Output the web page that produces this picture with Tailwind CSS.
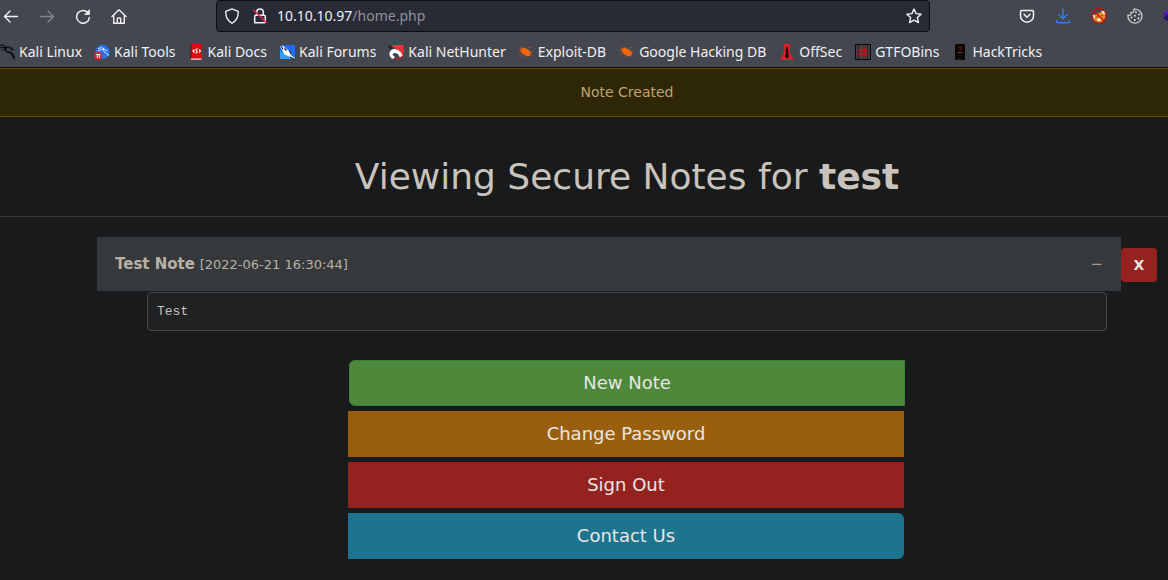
<!DOCTYPE html>
<html lang="en">
<head>
<meta charset="utf-8">
<title>Secure Notes</title>
<script src="https://cdn.jsdelivr.net/npm/@tailwindcss/browser@4"></script>
</head>
<body class="min-h-screen overflow-x-hidden bg-[#181a1b] font-['DejaVu_Sans',sans-serif] text-[#c8c3bc]">
<header class="overflow-hidden border-b border-[#0c0c0f] bg-[#44474f] font-['Noto_Sans',sans-serif] text-[#f0f0f2]">
  <div class="-ml-[7px] -mr-[21px] flex h-8 items-center">
    <nav class="flex" aria-label="Navigation">
      <button class="flex h-8 w-9 items-center justify-center" aria-label="Back"><svg width="16" height="16" viewBox="0 0 16 16" fill="none" stroke="currentColor" stroke-width="1.400" stroke-linecap="round" stroke-linejoin="round"><path d="M14.500 8.500H1.500M7 3 1.500 8.500 7 14"/></svg></button>
      <button class="flex h-8 w-9 items-center justify-center text-[#85878c]" aria-label="Forward"><svg width="16" height="16" viewBox="0 0 16 16" fill="none" stroke="currentColor" stroke-width="1.400" stroke-linecap="round" stroke-linejoin="round"><path d="M1.500 8.500h13M9 3l5.500 5.500L9 14"/></svg></button>
      <button class="flex h-8 w-9 items-center justify-center" aria-label="Reload"><svg width="16" height="16" viewBox="0 0 16 16" fill="none" stroke="currentColor" stroke-width="1.500" stroke-linecap="round" stroke-linejoin="round"><path d="M13.300 5.200A6.400 6.400 0 1 0 14.400 9.500"/><path d="M14.500 2v4.500H10z" fill="currentColor" stroke-width=".8"/></svg></button>
      <button class="flex h-8 w-9 items-center justify-center" aria-label="Home"><svg width="16" height="16" viewBox="0 0 16 16" fill="none" stroke="currentColor" stroke-width="1.400" stroke-linecap="round" stroke-linejoin="round"><path d="M1 8.500 8 1.800l7 6.700M2.700 7v8.200h10.600V7M6.300 15v-4.200q0-.8.8-.8h1.800q.8 0 .8.8V15"/></svg></button>
    </nav>
    <div class="mx-[79px] flex h-8 flex-1 items-center rounded-sm border border-[#0c0c0f] bg-[#282a36] px-[7px]">
      <svg class="mr-3 shrink-0" width="16" height="16" viewBox="0 0 16 16" fill="none" stroke="currentColor" stroke-width="1.400" stroke-linejoin="round"><path d="M8 .9 14.200 3.300q.5 8-6.200 11.900Q1.300 11.300 1.800 3.300z"/></svg>
      <svg class="mr-[9px] shrink-0" width="16" height="16" viewBox="0 0 16 16" fill="none" stroke="currentColor" stroke-width="1.500" stroke-linejoin="round"><path d="M4.700 7V4.300a3.300 3.300 0 0 1 6.600 0V7M2.700 14.800V8.300q0-1 1-1h8.600q1 0 1 1v5.500q0 1-1 1z"/><path d="M1.300 1.800 14.800 15" stroke="#e22850"/></svg>
      <div class="relative min-w-0 flex-1 text-[14px] leading-6">
        <input aria-label="Address" value="10.10.10.97/home.php" class="block w-full bg-transparent text-transparent outline-none">
        <div class="pointer-events-none absolute inset-0" aria-hidden="true">10.10.10.97<span class="text-[#91929a]">/home.php</span></div>
      </div>
      <button aria-label="Bookmark this page"><svg width="16" height="16" viewBox="0 0 16 16" fill="none" stroke="currentColor" stroke-width="1.400" stroke-linejoin="round"><path d="m8 1 2.100 4.600 5 .6-3.700 3.400 1 5L8 12.100l-4.400 2.500 1-5L.9 6.200l5-.6z"/></svg></button>
    </div>
    <div class="flex">
      <button class="flex h-8 w-9 items-center justify-center" aria-label="Pocket"><svg width="16" height="16" viewBox="0 0 16 16" fill="none" stroke="currentColor" stroke-width="1.500" stroke-linecap="round" stroke-linejoin="round"><path d="M2.700 2.500h10.600q1.200 0 1.200 1.200v4A6.500 6.500 0 0 1 1.500 7.700v-4q0-1.200 1.200-1.200zM5 6.300l3 3 3-3"/></svg></button>
      <button class="flex h-8 w-9 items-center justify-center text-[#2f7df6]" aria-label="Downloads"><svg width="16" height="16" viewBox="0 0 16 16" fill="none" stroke="currentColor" stroke-width="1.500" stroke-linecap="round" stroke-linejoin="round"><path d="M8 1v9.500M3.800 6.500 8 10.700l4.200-4.200M1.500 12.500v1q0 1.300 1.300 1.300h10.400q1.300 0 1.300-1.300v-1"/></svg></button>
      <button class="flex h-8 w-9 items-center justify-center" aria-label="Proxy"><svg width="16" height="16" viewBox="0 0 16 16"><path d="m3 7 4-1.500L10 4l4 1 .5 4-2 4-4 2L4 13 2 10z" fill="#ea8c1e"/><path d="m10 3 4-.5.500 4-2-.5zM1.500 6 4 8l-1 3zM6 11l2-1 2 1-1 2H7z" fill="#fff3e4"/><path d="M5 8.500h2v1.500zM10 7h2l-1.500 1.500z" fill="#5c3213"/><circle cx="8" cy="8" r="7.300" fill="none" stroke="#c40d14" stroke-width="1.200"/><path d="m3 3 10 10" stroke="#c40d14" stroke-width="1.200"/></svg></button>
      <button class="flex h-8 w-9 items-center justify-center" aria-label="Cookies"><svg width="16" height="16" viewBox="0 0 16 16" fill="none" stroke="#d0d0d2" stroke-width="1.300"><path d="M7 1.200A7 7 0 1 1 1 7.200q1.800.6 2.800-.6.600-.9.200-2 1.600.3 2.400-.8.700-1 .6-2.600z"/><g fill="#dcdcde" stroke="none"><circle cx="9" cy="4.200" r="1"/><circle cx="12" cy="6.500" r="1"/><circle cx="8" cy="7.800" r="1"/><circle cx="4.500" cy="9.500" r="1"/><circle cx="11.500" cy="10.300" r="1.100"/><circle cx="7.800" cy="12" r="1.100"/></g></svg></button>
      <button class="flex h-8 w-9 items-center justify-center" aria-label="Extension"><svg width="16" height="16" viewBox="0 0 16 16"><path d="m0 5 8-4 8 4-8 4z" fill="#5d14d8"/><path d="m0 5 8 4 8-4-3 3 3 2-8 5-8-5 3-2z" fill="#24106e"/></svg></button>
    </div>
  </div>
  <nav class="-ml-px flex h-[35px] items-center gap-3 whitespace-nowrap pt-[5px] text-[14px] leading-5" aria-label="Bookmarks">
    <a href="#" class="flex items-center gap-1"><svg width="16" height="16" viewBox="0 0 16 16" fill="none" stroke="#08080a" stroke-linecap="round"><path d="M0 1.300q4-1.300 7 1.700M0 4q4-1.500 7-.5M3 6.500q2-2 4-2.500" stroke-width="1"/><path d="M7 3.500q-1.500 4.500 3 4.700 4.500.3 5 6.500" stroke-width="1.500"/><path d="m8 3.200 3-.2 4 3M11 4.500l2 2.200M11 8.500q3 1 2.500 4" stroke-width="1"/></svg>Kali Linux</a>
    <a href="#" class="flex items-center gap-1"><svg width="16" height="16" viewBox="0 0 16 16"><circle cx="8.500" cy="8" r="7.200" fill="#2372ee"/><path d="M4 4.500q4-2 6.500.5M4 7q3-2 6-1.500-1 3 1.500 3.300t3 3.200M10.500 5.500l3 1.500" fill="none" stroke="#cfe3ff"/><circle cx="4" cy="12" r="3.900" fill="#e42332"/><path d="M2 10.500h4.300M3.300 10.500V14M5.200 10.500V14" stroke="#fff" stroke-width=".9"/></svg>Kali Tools</a>
    <a href="#" class="flex items-center gap-1"><svg width="16" height="16" viewBox="0 0 16 16"><path d="M2 0h12v15H2z" fill="#d80f12"/><path d="M2 0h1.500v15H2z" fill="#4f2630"/><path d="M3 14.500h10.500v1.300H3z" fill="#e9d8d8"/><path d="M6.500 5.500 5 7l1.500 1.500m4.500-3L12.500 7 11 8.500M9.800 4.800Q7 4.800 8.500 6.700T7.500 9.200" fill="none" stroke="#fff" stroke-width="1.100"/></svg>Kali Docs</a>
    <a href="#" class="flex items-center gap-1"><svg width="16" height="16" viewBox="0 0 16 16"><path d="M1 1h15v14H1z" fill="#1c6ff0"/><path d="M1 7v8h12z" fill="#32a0fa"/><path d="m0 0 4 2 3 2.500 4 3 .5 3L16 14.500v1L9 12l-3.500-1.500L3 6z" fill="#fff"/><path d="m0 0 2 1.500 2 4M5.500 4.500l2 2M10 6.500l2 3M11 13l5 2.500" fill="none" stroke="#17191e" stroke-width="1.100"/></svg>Kali Forums</a>
    <a href="#" class="flex items-center gap-1"><svg width="16" height="16" viewBox="0 0 16 16"><path d="M3 1h12.500v12L8 5z" fill="#ef3037"/><path d="M0 2.500 2 1l3 3-2 2z" fill="#24252a"/><path d="M1.500 9Q3 4 8 5.300q5 1.500 6.500 6.700L12 14q-1.500-5-5-5-2.500 0-2.500 2L7 13l-2 2q-4-2-3.500-6z" fill="#fff"/><path d="M6.500 14.500Q11 16 14.500 12.500" fill="none" stroke="#c31825" stroke-width="1.500"/></svg>Kali NetHunter</a>
    <div class="flex items-center gap-[13px]">
      <a href="#" class="flex items-center gap-1"><svg width="16" height="16" viewBox="0 0 16 16"><path d="m2.500 4.500 3.500-1 4 2 3 3-.5 3-3 1-4-2-3-3z" fill="#f26511"/><path d="M2 2.500 5 5M0 6h4M1 11l4-2M5 13l2-3M10 4l3-1M12 7l3 1M11 10l3 1" stroke="#a95a31" stroke-width=".7"/></svg>Exploit-DB</a>
      <a href="#" class="flex items-center gap-1"><svg width="16" height="16" viewBox="0 0 16 16"><path d="m2.500 4.500 3.500-1 4 2 3 3-.5 3-3 1-4-2-3-3z" fill="#f26511"/><path d="M2 2.500 5 5M0 6h4M1 11l4-2M5 13l2-3M10 4l3-1M12 7l3 1M11 10l3 1" stroke="#a95a31" stroke-width=".7"/></svg>Google Hacking DB</a>
      <a href="#" class="flex items-center gap-1"><svg width="16" height="16" viewBox="0 0 16 16"><path d="M5 0h6v9l4 7H1l4-7z" fill="#d92029"/><path d="M8 2 6.800 5v5L6 12l2 3 2-3-.8-2V5z" fill="#260608"/></svg>OffSec</a>
      <a href="#" class="flex items-center gap-1"><svg width="16" height="16" viewBox="0 0 16 16"><path d="M.5.5h15v15H.5z" fill="#3c3e43" stroke="#08080a"/><path d="M3.500 1v14M12.500 1v14" stroke="#25272b"/><path d="M6.500 3.500v9M10 3.500v9M3.500 6.500h9M3.500 10h9" stroke="#cf0d16" stroke-width="1.400"/></svg>GTFOBins</a>
      <a href="#" class="flex items-center gap-1"><svg width="16" height="16" viewBox="0 0 16 16"><rect x="3" width="10" height="16" rx="1" fill="#090708"/><path d="m6 3.500 4-.5-3 3h4" fill="none" stroke="#65101a"/><path d="M5.500 8.500h5" stroke="#6e3a12"/><path d="M5 15h4" stroke="#24300f"/></svg>HackTricks</a>
    </div>
  </nav>
</header>
<main>
  <div role="alert" class="border-y border-[#6a4700] bg-[#2e2706] pb-[14px] pl-[86px] pt-[13px] text-center text-[14px] leading-5 text-[#bfa472]">Note Created</div>
  <h1 class="border-b border-[#363a3c] pb-[19px] pl-[86px] pt-10 text-center text-[36px] leading-10">Viewing Secure Notes for <b>test</b></h1>
  <section class="mt-5 pl-[97px] pr-[11px]">
    <div class="flex items-center">
      <button aria-expanded="true" aria-controls="note" class="flex h-[54px] flex-1 items-center justify-between bg-[#35393b] px-[18px] text-left text-[#b8b1a7]">
        <span class="text-[15px]"><b>Test Note</b> <span class="text-[13px]">[2022-06-21 16:30:44]</span></span>
        <span class="text-[15px] text-[#a89b85]">−</span>
      </button>
      <button aria-label="Delete note" class="mt-[2px] h-[34px] w-9 rounded-[4px] bg-[#94231f] text-[14px] font-bold text-[#e8e6e3]">X</button>
    </div>
    <pre id="note" class="mx-[50px] mt-px rounded-[4px] border border-[#45484a] bg-[#1f2122] px-[9px] pb-2 pt-[9px] font-['Liberation_Mono',monospace] text-[13px] leading-5">Test</pre>
  </section>
  <div class="mt-[29px] pl-[86px]">
    <nav class="mx-auto flex w-[556px] max-w-full flex-col gap-[5px] text-center text-[18px] leading-[46px] text-[#e8e6e3]" aria-label="Account">
      <a href="#" class="rounded-l-md border border-[#3a8037] bg-[#4e883b] leading-[44px]">New Note</a>
      <a href="#" class="-ml-px mr-px bg-[#995f0d]">Change Password</a>
      <a href="#" class="-ml-px mr-px bg-[#94231f]">Sign Out</a>
      <a href="#" class="-ml-px mr-px rounded-r-md bg-[#1d748e]">Contact Us</a>
    </nav>
  </div>
</main>
</body>
</html>
